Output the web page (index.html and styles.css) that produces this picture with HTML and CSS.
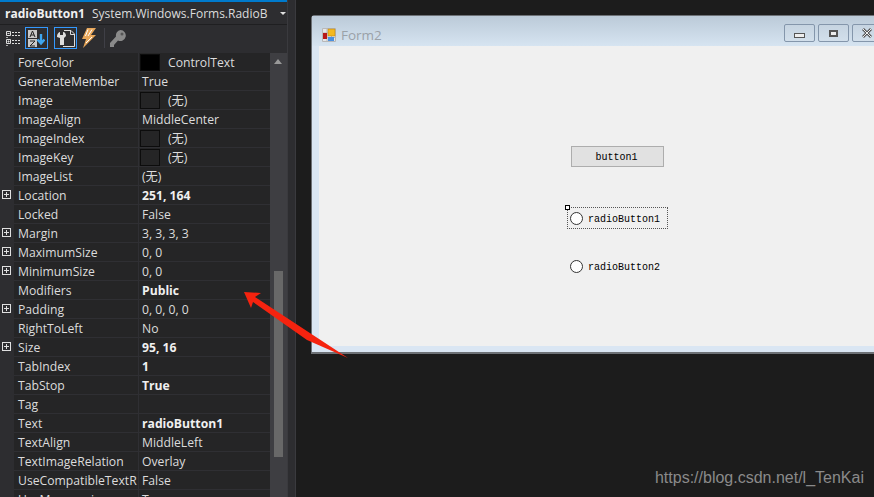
FILE: index.html
```html
<!DOCTYPE html>
<html lang="en">
<head>
    <meta charset="UTF-8">
    <title>Form2 designer</title>
    <link rel="stylesheet" href="styles.css">
</head>
<body>
    <div class="props">
        <div class="props-title">
            <b>radioButton1</b>
            <span class="props-type">System.Windows.Forms.RadioB</span>
            <span class="caret"></span>
        </div>
        <div class="toolbar">
            <svg class="tool-cat" width="15" height="15" viewBox="0 0 15 15">
                <path d="M.5.5h4v4h-4zM.5 8.500h4v4h-4z" fill="none" stroke="#ddd"/>
                <path d="M1.500 2.500h2M1.500 10.500h2M2.500 9.500v2" stroke="#ddd"/>
                <path d="M6 1.500h9M6 4.500h9M6 9.500h9M6 12.500h9" stroke="#ddd" stroke-dasharray="2 1"/>
                <path d="M0 6.500h2M0 14.500h2" stroke="#aaa"/>
            </svg>
            <span class="toggle">
                <svg width="17" height="17" viewBox="0 0 17 17">
                    <rect x="0" y="0" width="9" height="8" fill="#c8c8c8"/>
                    <rect x="0" y="9" width="9" height="8" fill="#c8c8c8"/>
                    <path d="M2 7l2.500-6L7 7M3 5h3M2 11h5l-5 5h5" fill="none" stroke="#222"/>
                    <path d="M13 4v9M9.500 9.500l3.500 4 3.500-4" fill="none" stroke="#3ea6f0" stroke-width="2.400"/>
                </svg>
            </span>
            <span class="toggle toggle-next">
                <svg width="18" height="17" viewBox="0 0 18 17">
                    <path d="M7 .5h7l3.500 3.500v12.500H6" fill="none" stroke="#ddd"/>
                    <path d="M13.500.5v4h4" fill="none" stroke="#ddd"/>
                    <path d="M0 6c0-2 2-4 3-4v3h3V2c2 0 3 2 3 4L7 8v7H3V8L0 7z" fill="#ddd"/>
                </svg>
            </span>
            <svg class="tool-bolt" width="14" height="20" viewBox="0 0 14 20">
                <path d="M5 0h9L9 7h5L1 20l3-9H0z" fill="#e8a75a"/>
                <path d="M6 1.500L3.500 8M10 1.500L6 8M10 9l-6 6" stroke="#fff"/>
            </svg>
            <span class="tool-sep"></span>
            <svg width="17" height="18" viewBox="0 0 17 18">
                <path d="M10.500 1a5.500 5.500 0 1 1-2.500 10.500L4 16v2H0v-4l6-6.500A5.500 5.500 0 0 1 10.500 1z" fill="#8a8a8a"/>
                <circle cx="12" cy="5" r="1.500" fill="#555"/>
            </svg>
        </div>
        <div class="grid-wrap">
            <div class="rows">
                <div class="row"><span class="name">ForeColor</span><span class="val"><i class="swatch swatch-black"></i>ControlText</span></div>
                <div class="row"><span class="name">GenerateMember</span><span class="val">True</span></div>
                <div class="row"><span class="name">Image</span><span class="val"><i class="swatch"></i>(无)</span></div>
                <div class="row"><span class="name">ImageAlign</span><span class="val">MiddleCenter</span></div>
                <div class="row"><span class="name">ImageIndex</span><span class="val"><i class="swatch"></i>(无)</span></div>
                <div class="row"><span class="name">ImageKey</span><span class="val"><i class="swatch"></i>(无)</span></div>
                <div class="row"><span class="name">ImageList</span><span class="val">(无)</span></div>
                <div class="row plus"><span class="name">Location</span><span class="val bold">251, 164</span></div>
                <div class="row"><span class="name">Locked</span><span class="val">False</span></div>
                <div class="row plus"><span class="name">Margin</span><span class="val">3, 3, 3, 3</span></div>
                <div class="row plus"><span class="name">MaximumSize</span><span class="val">0, 0</span></div>
                <div class="row plus"><span class="name">MinimumSize</span><span class="val">0, 0</span></div>
                <div class="row"><span class="name">Modifiers</span><span class="val bold">Public</span></div>
                <div class="row plus"><span class="name">Padding</span><span class="val">0, 0, 0, 0</span></div>
                <div class="row"><span class="name">RightToLeft</span><span class="val">No</span></div>
                <div class="row plus"><span class="name">Size</span><span class="val bold">95, 16</span></div>
                <div class="row"><span class="name">TabIndex</span><span class="val bold">1</span></div>
                <div class="row"><span class="name">TabStop</span><span class="val bold">True</span></div>
                <div class="row"><span class="name">Tag</span><span class="val"></span></div>
                <div class="row"><span class="name">Text</span><span class="val bold">radioButton1</span></div>
                <div class="row"><span class="name">TextAlign</span><span class="val">MiddleLeft</span></div>
                <div class="row"><span class="name">TextImageRelation</span><span class="val">Overlay</span></div>
                <div class="row"><span class="name">UseCompatibleTextR</span><span class="val">False</span></div>
                <div class="row"><span class="name">UseMnemonic</span><span class="val">True</span></div>
            </div>
            <div class="scrollbar">
                <span class="arrow-up"></span>
                <span class="thumb"></span>
            </div>
        </div>
    </div>
    <div class="splitter"></div>
    <div class="designer">
        <div class="window">
            <div class="caption">
                <svg class="form-icon" width="14" height="14" viewBox="0 0 14 14">
                    <path d="M.5.5h13v13H.5zM.5 5h13M.5 9.500h13M5 .5v13M9.500.5v13" fill="#e6e6e6" stroke="#b8b8b8"/>
                    <rect x="1" y="5" width="4" height="6" fill="#b81818"/>
                    <rect x="6" y="1" width="7" height="7" fill="#f4b920" stroke="#b57d10" stroke-width="0.500"/>
                    <rect x="6" y="9" width="6" height="4" fill="#4a90e0"/>
                </svg>
                <span class="form-title">Form2</span>
                <div class="caption-btns">
                    <span class="cap-btn"><i class="ico-min"></i></span>
                    <span class="cap-btn"><i class="ico-max"></i></span>
                    <span class="cap-btn cap-close">
                        <svg width="12" height="10" viewBox="0 0 12 10"><path d="M2 1l8 8M10 1l-8 8" stroke="#555" stroke-width="2.800"/><path d="M2 1l8 8M10 1l-8 8" stroke="#eee" stroke-width="1"/></svg>
                    </span>
                </div>
            </div>
            <div class="client">
                <div class="win-button">button1</div>
                <div class="win-radio focus"><i class="radio"></i><span class="radio-text">radioButton1</span></div>
                <span class="handle"></span>
                <div class="win-radio second"><i class="radio"></i><span class="radio-text">radioButton2</span></div>
            </div>
        </div>
        <div class="watermark">https://blog.csdn.net/l_TenKai</div>
    </div>
    <svg class="arrow" width="874" height="497" viewBox="0 0 874 497">
        <polygon points="244,292 261,293 255,297 348,358 307,340 253,302 251,308" fill="#f5230f"/>
    </svg>
</body>
</html>
```

FILE: styles.css
```css
html, body {
    height: 100%;
}
body {
    display: flex;
    margin: 0;
    overflow: hidden;
    background: #1c1c1c;
    font-family: "Open Sans", "Noto Sans CJK SC", sans-serif;
    font-size: 12.2px;
    color: #dcdcdc;
}
.props {
    display: flex;
    flex-direction: column;
    flex: none;
    width: 287px;
    height: 497px;
    background: #2d2d30;
    border-top: 2px solid #007acc;
    box-sizing: border-box;
}
.props-title {
    display: flex;
    align-items: center;
    flex: none;
    height: 23px;
    padding-left: 5px;
    border-bottom: 1px solid #1f1f21;
    box-sizing: border-box;
    white-space: nowrap;
}
.props-title b {
    font-size: 12px;
    color: #f0f0f0;
}
.props-type {
    flex: none;
    width: 183px;
    margin-left: 7px;
    font-size: 12px;
}
.caret {
    margin-left: 5px;
    border-left: 3px solid transparent;
    border-right: 3px solid transparent;
    border-top: 3px solid #e0e0e0;
}
.toolbar {
    display: flex;
    align-items: center;
    flex: none;
    height: 28px;
    padding: 0 0 2px 6px;
    box-sizing: border-box;
}
.tool-cat {
    margin-right: 4px;
}
.toggle {
    display: flex;
    align-items: center;
    justify-content: center;
    width: 23px;
    height: 22px;
    box-sizing: border-box;
    border: 1px solid #3399ff;
}
.toggle-next {
    margin-left: 6px;
}
.tool-bolt {
    margin-left: 5px;
}
.tool-sep {
    width: 1px;
    height: 20px;
    margin: 0 5px 0 8px;
    background: #3f3f46;
}
.grid-wrap {
    display: flex;
    flex: 1;
    min-height: 0;
}
.rows {
    flex: none;
    width: 270px;
}
.row {
    position: relative;
    display: flex;
    height: 19px;
    line-height: 20px;
    box-sizing: border-box;
    margin-left: 14px;
    background: #252526;
    border-bottom: 1px solid #2f2f33;
}
.row.plus::before {
    content: "";
    position: absolute;
    left: -12px;
    top: 4px;
    width: 7px;
    height: 7px;
    border: 1px solid #e0e0e0;
    background: linear-gradient(#e0e0e0, #e0e0e0) center / 5px 1px no-repeat, linear-gradient(#e0e0e0, #e0e0e0) center / 1px 5px no-repeat;
}
.name {
    flex: none;
    width: 124px;
    padding-left: 4px;
    box-sizing: border-box;
    overflow: hidden;
    white-space: nowrap;
}
.val {
    display: flex;
    align-items: flex-start;
    flex: 1;
    padding-left: 3px;
    border-left: 1px solid #2f2f33;
    white-space: nowrap;
}
.bold {
    font-weight: 700;
    color: #f0f0f0;
}
.swatch {
    flex: none;
    width: 18px;
    height: 15px;
    margin: 1px 8px 0 -2px;
    border: 1px solid #0c0c0c;
}
.swatch-black {
    background: #000;
}
.scrollbar {
    position: relative;
    flex: none;
    width: 17px;
    background: #3e3e42;
}
.arrow-up {
    position: absolute;
    left: 4px;
    top: 6px;
    border-left: 4.5px solid transparent;
    border-right: 4.5px solid transparent;
    border-bottom: 5px solid #999;
}
.thumb {
    position: absolute;
    left: 4px;
    top: 218px;
    width: 9px;
    height: 186px;
    background: #686868;
}
.splitter {
    flex: none;
    width: 9px;
    background: #2d2d30;
    border-left: 1px solid #3a3a3e;
    border-right: 1px solid #3a3a3e;
    box-sizing: border-box;
}
.designer {
    position: relative;
    flex: 1;
    padding: 15px 0 0 15px;
    min-width: 0;
}
.window {
    display: flex;
    flex-direction: column;
    width: 620px;
    height: 339px;
    box-sizing: border-box;
    padding: 0 0 6px 7px;
    border: 1px solid #6d7176;
    border-bottom-width: 2px;
    border-radius: 4px 0 0 0;
    background: #dae6f3;
}
.caption {
    display: flex;
    align-items: center;
    flex: none;
    height: 30px;
    box-sizing: border-box;
    margin-left: -7px;
    padding: 7px 0 0 10px;
    background: linear-gradient(#bbcad8, #d6e4f1);
}
.form-title {
    margin-left: 5px;
    font-size: 13.5px;
    color: #9aa1a8;
}
.form-icon {
    flex: none;
}
.caption-btns {
    display: flex;
    gap: 3px;
    margin: -3px 0 0 402px;
}
.cap-btn {
    display: flex;
    align-items: center;
    justify-content: center;
    flex: none;
    width: 31px;
    height: 18px;
    box-sizing: border-box;
    border: 1px solid #8496ab;
    border-radius: 2px;
    background: linear-gradient(#c6d4e1, #d2dfeb);
}
.ico-min {
    width: 9px;
    height: 3px;
    margin-top: 4px;
    border: 1px solid #555;
    background: #eee;
}
.ico-max {
    width: 5px;
    height: 3px;
    border: 2px solid #555;
    background: #eee;
}
.client {
    position: relative;
    flex: 1;
    background: #f0f0f0;
    font-family: "Liberation Mono", monospace;
    font-size: 10px;
    color: #000;
}
.win-button {
    position: absolute;
    left: 252px;
    top: 100px;
    width: 93px;
    height: 21px;
    box-sizing: border-box;
    padding: 1px 2px 0 0;
    border: 1px solid #adadad;
    background: #e1e1e1;
    text-align: center;
    line-height: 20px;
}
.win-radio {
    position: absolute;
    left: 248px;
    display: flex;
    align-items: center;
    width: 101px;
    height: 22px;
    box-sizing: border-box;
    padding-left: 2px;
}
.radio-text {
    padding-top: 2px;
}
.win-radio.focus {
    top: 161px;
    border: 1px dotted #555;
}
.win-radio.second {
    top: 209px;
    border: 1px solid transparent;
}
.radio {
    flex: none;
    width: 11px;
    height: 11px;
    margin-right: 5px;
    border: 1px solid #333;
    border-radius: 50%;
    background: #fff;
}
.handle {
    position: absolute;
    left: 246px;
    top: 159px;
    width: 3px;
    height: 3px;
    border: 1px solid #000;
    background: #fff;
}
.watermark {
    position: absolute;
    right: 10px;
    bottom: 10px;
    font-family: "Liberation Sans", sans-serif;
    font-size: 16px;
    color: #8a8a8a;
}
.arrow {
    position: absolute;
    left: 0;
    top: 0;
    pointer-events: none;
}
```
